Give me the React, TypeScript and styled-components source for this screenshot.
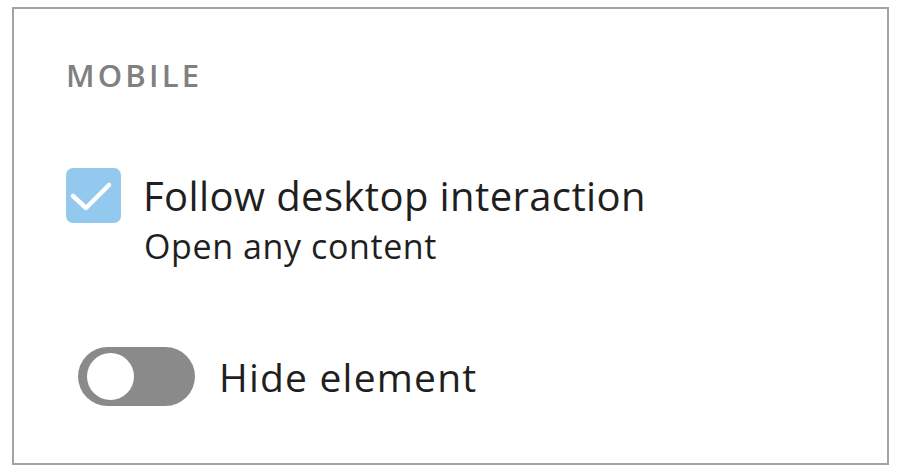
import React from "react";
import styled, { createGlobalStyle } from "styled-components";

const Global = createGlobalStyle`
  html, body { margin: 0; padding: 0; background: #ffffff; }
  body { font-family: "Open Sans", "Noto Sans", sans-serif; }
`;

const Panel = styled.div`
  box-sizing: border-box;
  margin: 7px 0 0 12px;
  width: 877px;
  height: 458px;
  border: 2px solid #a3a3a3;
  padding: 51px 0 0 52px;
  display: flex;
  flex-direction: column;
`;

const Heading = styled.div`
  font-size: 31px;
  line-height: 1;
  font-weight: 600;
  letter-spacing: 3.2px;
  color: #808080;
`;

const CheckRow = styled.div`
  display: flex;
  align-items: flex-start;
  gap: 22px;
  margin-top: 77px;
`;

const Box = styled.div<{ $checked: boolean }>`
  box-sizing: border-box;
  width: 55px;
  height: 55px;
  flex: none;
  border-radius: 7px;
  background: ${(p) => (p.$checked ? "#94c9ef" : "#ffffff")};
  display: flex;
  align-items: center;
  justify-content: center;
`;

const TextCol = styled.div`
  display: flex;
  flex-direction: column;
  gap: 13px;
  margin-top: 8px;
`;

const Title = styled.div`
  font-size: 40px;
  line-height: 1;
  letter-spacing: 0.4px;
  color: #1f1f1f;
`;

const Sub = styled.div`
  font-size: 34px;
  line-height: 1;
  letter-spacing: 0.6px;
  color: #1f1f1f;
  padding-left: 1px;
`;

const ToggleRow = styled.div`
  display: flex;
  align-items: center;
  gap: 24px;
  margin-top: 84px;
  margin-left: 12px;
`;

const Track = styled.div<{ $on: boolean }>`
  box-sizing: border-box;
  width: 117px;
  height: 59px;
  border-radius: 30px;
  background: ${(p) => (p.$on ? "#94c9ef" : "#8a8a8a")};
  padding: 6px 9px;
  display: flex;
  justify-content: ${(p) => (p.$on ? "flex-end" : "flex-start")};
  align-items: center;
`;

const Knob = styled.div`
  width: 47px;
  height: 47px;
  border-radius: 50%;
  background: #ffffff;
`;

const ToggleLabel = styled.div`
  font-size: 39px;
  line-height: 1;
  letter-spacing: 1.2px;
  color: #1f1f1f;
`;

export default function App() {
  return (
    <>
      <Global />
      <Panel>
        <Heading>MOBILE</Heading>
        <CheckRow>
          <Box $checked>
            <svg width="55" height="55" viewBox="0 0 55 55">
              <polyline
                points="7,28 20,40 43,17"
                fill="none"
                stroke="#ffffff"
                strokeWidth="4.5"
                strokeLinecap="round"
                strokeLinejoin="round"
              />
            </svg>
          </Box>
          <TextCol>
            <Title>Follow desktop interaction</Title>
            <Sub>Open any content</Sub>
          </TextCol>
        </CheckRow>
        <ToggleRow>
          <Track $on={false}>
            <Knob />
          </Track>
          <ToggleLabel>Hide element</ToggleLabel>
        </ToggleRow>
      </Panel>
    </>
  );
}
